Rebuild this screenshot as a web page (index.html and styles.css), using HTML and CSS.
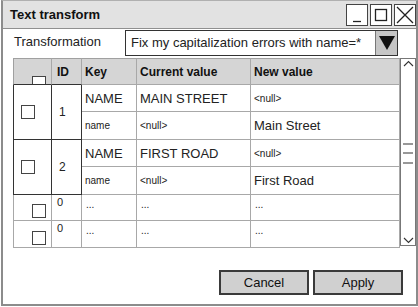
FILE: index.html
```html
<!DOCTYPE html>
<html lang="en">
<head>
    <meta charset="UTF-8">
    <title>Text transform</title>
    <link rel="stylesheet" href="styles.css">
</head>
<body>
    <div class="window">
        <div class="titlebar">
            <span class="title">Text transform</span>
            <div class="win-buttons">
                <span class="win-btn"><svg width="20" height="20" viewBox="0 0 20 20"><path d="M6 16.5 H14" stroke="#222" stroke-width="1.3"/></svg></span>
                <span class="win-btn"><svg width="20" height="20" viewBox="0 0 20 20"><rect x="4.5" y="4.5" width="11" height="11" fill="none" stroke="#222" stroke-width="1.3"/></svg></span>
                <span class="win-btn"><svg width="20" height="20" viewBox="0 0 20 20"><path d="M2 2 L18 18 M18 2 L2 18" stroke="#222" stroke-width="1.3"/></svg></span>
            </div>
        </div>

        <div class="content">
            <div class="field-row">
                <label class="field-label">Transformation</label>
                <div class="select">
                    <span class="select-text">Fix my capitalization errors with name=*</span>
                    <span class="select-btn"><svg width="16" height="14" viewBox="0 0 16 14"><path d="M0 0 H16 L8 14 Z" fill="#111"/></svg></span>
                </div>
            </div>

            <div class="table-wrap">
                <div class="grid">
                    <div class="cell head chk-head"><span class="mini-box"></span></div>
                    <div class="cell head">ID</div>
                    <div class="cell head">Key</div>
                    <div class="cell head">Current value</div>
                    <div class="cell head">New value</div>

                    <div class="cell grp grp-chk r2"><span class="box"></span></div>
                    <div class="cell grp grp-id r2">1</div>
                    <div class="cell big">NAME</div>
                    <div class="cell big">MAIN STREET</div>
                    <div class="cell small">&lt;null&gt;</div>
                    <div class="cell small">name</div>
                    <div class="cell small">&lt;null&gt;</div>
                    <div class="cell big">Main Street</div>

                    <div class="cell grp grp-chk r4"><span class="box"></span></div>
                    <div class="cell grp grp-id r4">2</div>
                    <div class="cell big">NAME</div>
                    <div class="cell big">FIRST ROAD</div>
                    <div class="cell small">&lt;null&gt;</div>
                    <div class="cell small">name</div>
                    <div class="cell small">&lt;null&gt;</div>
                    <div class="cell big">First Road</div>

                    <div class="cell empty-chk"><span class="box"></span></div>
                    <div class="cell top">0</div>
                    <div class="cell top dots">...</div>
                    <div class="cell top dots">...</div>
                    <div class="cell top dots">...</div>

                    <div class="cell empty-chk"><span class="box"></span></div>
                    <div class="cell top">0</div>
                    <div class="cell top dots">...</div>
                    <div class="cell top dots">...</div>
                    <div class="cell top dots">...</div>
                </div>
                <div class="scrollbar">
                    <svg width="15" height="186" viewBox="0 0 15 186">
                        <path d="M3 7 L7.5 2.5 L12 7" fill="none" stroke="#333" stroke-width="1.1"/>
                        <path d="M2 85 H12 M2 94 H12 M2 104 H12" stroke="#333" stroke-width="1.1"/>
                        <path d="M3 179 L7.5 183.5 L12 179" fill="none" stroke="#333" stroke-width="1.1"/>
                    </svg>
                </div>
            </div>

            <div class="actions">
                <button class="btn">Cancel</button>
                <button class="btn">Apply</button>
            </div>
        </div>
    </div>
</body>
</html>
```

FILE: styles.css
```css
body {
    margin: 0;
    font-family: "Liberation Sans", Arial, sans-serif;
    color: #222;
    background: #fff;
}

.window {
    box-sizing: border-box;
    width: 417px;
    height: 306px;
    margin-left: 1px;
    border: 2px solid #8c8c8c;
    border-top: 1px solid #b0b0b0;
    background: #fff;
}

.titlebar {
    height: 27px;
    display: flex;
    align-items: center;
    justify-content: space-between;
    background: #e2e2e2;
    border-bottom: 1px solid #8f8f8f;
}

.title {
    padding-left: 7px;
    font-size: 13px;
    font-weight: bold;
    color: #111;
}

.win-buttons {
    display: flex;
    gap: 2px;
    align-self: flex-start;
    margin-top: 3px;
}

.win-btn {
    box-sizing: border-box;
    width: 22px;
    height: 22px;
    display: flex;
    align-items: center;
    justify-content: center;
    background: #fff;
    border: 1px solid #444;
}

.field-row {
    display: flex;
    align-items: center;
    margin-top: 1px;
    height: 26px;
}

.field-label {
    width: 111px;
    padding-left: 11px;
    font-size: 13px;
    margin-top: -3px;
}

.select {
    box-sizing: border-box;
    width: 273px;
    height: 26px;
    display: flex;
    border: 1px solid #333;
}

.select-text {
    flex: 1;
    padding-left: 5px;
    font-size: 13px;
    line-height: 24px;
}

.select-btn {
    width: 21px;
    display: flex;
    align-items: center;
    justify-content: center;
    background: #c6c6c6;
    border-left: 1px solid #777;
}

.table-wrap {
    display: flex;
    margin: 2px 0 0 10px;
}

.grid {
    display: grid;
    grid-template-columns: 39px 30px 55px 114px 149px;
    grid-template-rows: 27px 27px 28px 27px 28px 26px 27px;
}

.cell {
    box-sizing: border-box;
    border-right: 1px solid #a8a8a8;
    border-bottom: 1px solid #a8a8a8;
    padding-left: 3px;
    display: flex;
    align-items: center;
    font-size: 13px;
    white-space: nowrap;
    overflow: hidden;
}

.head {
    background: #d5d5d5;
    border-top: 1px solid #a0a0a0;
    font-weight: bold;
    font-size: 12px;
    color: #111;
}

.chk-head {
    border-left: 1px solid #a0a0a0;
    border-bottom-color: #333;
    align-items: flex-end;
    justify-content: flex-end;
    padding-right: 5px;
}

.chk-head + .head {
    border-bottom-color: #333;
    padding-left: 5px;
}

.mini-box {
    box-sizing: border-box;
    width: 14px;
    height: 8px;
    background: #fff;
    border: 1px solid #444;
    border-bottom: none;
}

.grp {
    border-color: #333;
}

.grp-chk {
    border-left: 1px solid #333;
    padding-left: 7px;
}

.grp-id {
    padding-left: 7px;
    font-size: 12px;
}

.r2 {
    grid-row: 2 / span 2;
}

.r4 {
    grid-row: 4 / span 2;
}

.box {
    box-sizing: border-box;
    width: 14px;
    height: 14px;
    border: 1px solid #444;
    background: #fff;
}

.big {
    font-size: 13px;
}

.small {
    font-size: 10px;
}

.empty-chk {
    border-left: 1px solid #a8a8a8;
    align-items: flex-end;
    justify-content: flex-end;
    padding-right: 5px;
    padding-bottom: 2px;
}

.top {
    align-items: flex-start;
    padding-left: 5px;
    font-size: 11px;
    line-height: 11px;
    padding-top: 2px;
}

.dots {
    padding-left: 4px;
    padding-top: 4px;
    font-size: 10px;
}

.scrollbar {
    box-sizing: border-box;
    width: 16px;
    height: 188px;
    border: 1px solid #777;
    background: #fff;
}

.scrollbar svg {
    display: block;
}

.actions {
    display: flex;
    justify-content: flex-end;
    gap: 4px;
    margin-top: 22px;
    padding-right: 13px;
}

.btn {
    box-sizing: border-box;
    width: 90px;
    height: 25px;
    background: #d0d0d0;
    border: 2px solid #3a3a3a;
    font-family: "Liberation Sans", Arial, sans-serif;
    font-size: 13px;
    color: #111;
}
```
